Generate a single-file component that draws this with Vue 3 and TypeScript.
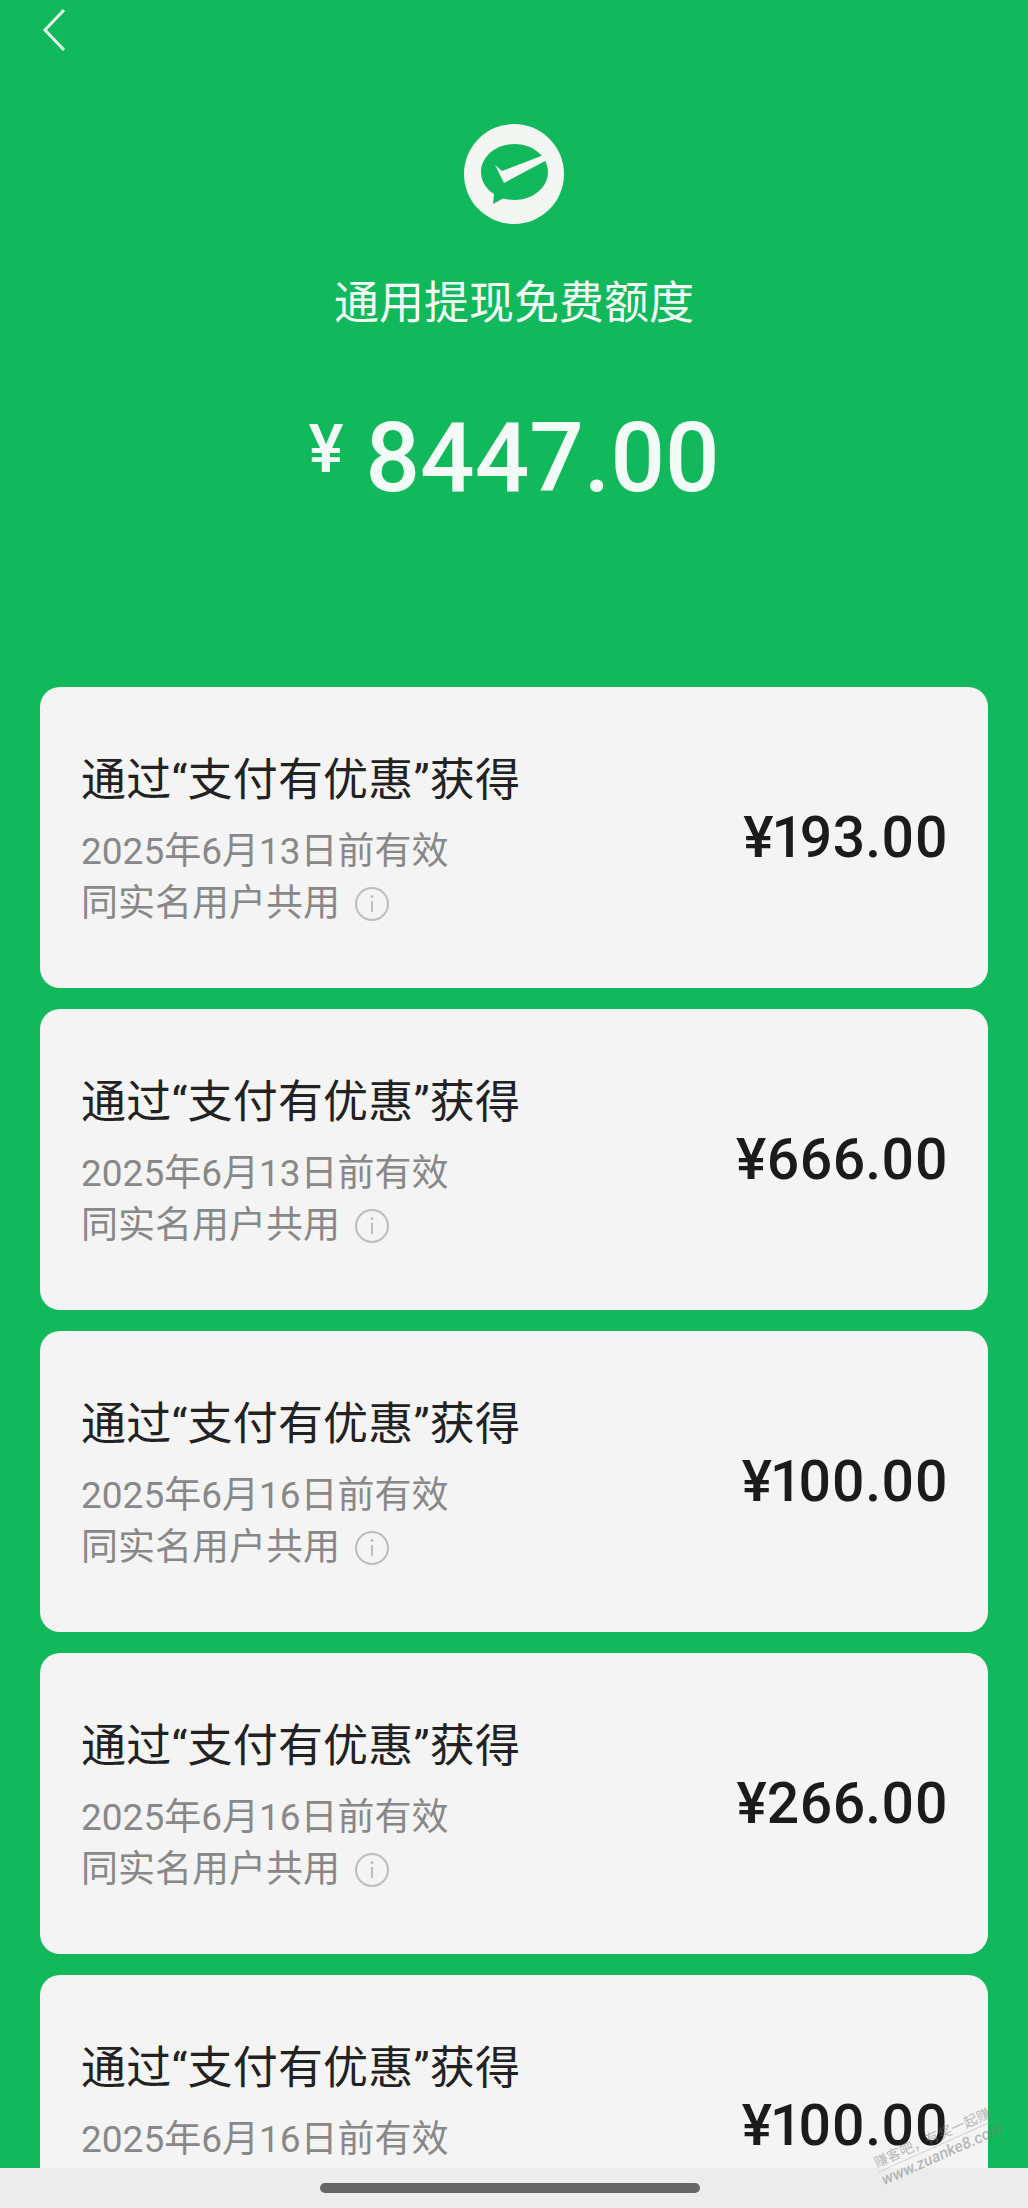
<script setup lang="ts">
interface Quota {
  amount: string
  expires: string
}

const quotas: Quota[] = [
  { amount: '¥193.00', expires: '2025年6月13日前有效' },
  { amount: '¥666.00', expires: '2025年6月13日前有效' },
  { amount: '¥100.00', expires: '2025年6月16日前有效' },
  { amount: '¥266.00', expires: '2025年6月16日前有效' },
  { amount: '¥100.00', expires: '2025年6月16日前有效' },
]
</script>

<template>
  <main class="page">
    <header class="head">
      <svg class="back" width="24" height="44" viewBox="0 0 24 44" fill="none">
        <path d="M22 2 3 22l19 20" stroke="#e6f8ec" stroke-width="3" />
      </svg>
      <svg class="logo" width="100" height="100" viewBox="0 0 100 100">
        <circle cx="50" cy="50" r="50" fill="#f4f6f4" />
        <path
          d="M50.500 20C32 20 17 32.500 17 48c0 9 5 17 13 22l-1 10 10-5.500c3.500 1 7.500 1.500 11.500 1.500C69 76 84 63.500 84 48S69 20 50.500 20z"
          fill="#12b85c"
        />
        <path d="M31 41 38 47 81 30.500 83 36 40 59z" fill="#f4f6f4" />
      </svg>
      <h1 class="title">通用提现免费额度</h1>
      <div class="total">
        <span class="yen">¥</span>
        <span class="sum">8447.00</span>
      </div>
    </header>

    <section class="list">
      <article v-for="(item, i) in quotas" :key="i" class="card">
        <div class="info">
          <div class="source">通过“支付有优惠”获得</div>
          <div class="sub expires">{{ item.expires }}</div>
          <div class="sub shared">
            同实名用户共用
            <svg class="tip" width="36" height="36" viewBox="0 0 36 36" fill="none">
              <circle cx="18" cy="18" r="16" stroke="#bdbdbd" stroke-width="2" />
              <path d="M18 15v11" stroke="#bdbdbd" stroke-width="2" />
              <circle cx="18" cy="10.500" r="1.500" fill="#bdbdbd" />
            </svg>
          </div>
        </div>
        <div class="amount">{{ item.amount }}</div>
      </article>
    </section>

    <footer class="home-bar"><span class="pill"></span></footer>
    <div class="watermark">
      <div class="wm-cn">赚客吧，有奖一起赚</div>
      <div class="wm-en">www.zuanke8.com</div>
    </div>
  </main>
</template>

<style scoped>
.page {
  position: relative;
  width: 1028px;
  height: 2208px;
  overflow: hidden;
  background: #12b85c;
  font-family: Roboto, "Noto Sans CJK SC", sans-serif;
}

.head {
  height: 687px;
  display: flex;
  flex-direction: column;
  align-items: center;
  color: #f3fbf6;
}

.back {
  align-self: flex-start;
  margin: 8px 0 0 42px;
}

.logo {
  margin-top: 72px;
}

.title {
  margin: 50px 0 0;
  font-size: 45px;
  line-height: 60px;
  font-weight: 400;
}

.total {
  display: flex;
  align-items: flex-start;
  gap: 22px;
  margin-top: 67px;
}

.yen {
  margin-top: 4px;
  font-size: 66px;
  line-height: 90px;
  font-weight: 500;
}

.sum {
  font-size: 96px;
  line-height: 114px;
  font-weight: 500;
}

.list {
  display: flex;
  flex-direction: column;
  gap: 21px;
  padding: 0 40px;
}

.card {
  flex: none;
  display: flex;
  align-items: center;
  justify-content: space-between;
  height: 301px;
  padding: 0 40px 0 41px;
  box-sizing: border-box;
  background: #f4f4f4;
  border-radius: 20px;
}

.info {
  display: flex;
  flex-direction: column;
  padding-top: 5px;
}

.source {
  font-size: 45px;
  line-height: 60px;
  letter-spacing: 0.2px;
  color: #222;
  margin-bottom: 15px;
}

.sub {
  font-size: 37px;
  line-height: 52px;
  color: #888;
}

.shared {
  display: flex;
  align-items: center;
  gap: 14px;
}

.tip {
  flex: none;
}

.amount {
  font-size: 57px;
  line-height: 70px;
  font-weight: 500;
  font-variant-numeric: proportional-nums;
  color: #1b1b1b;
}

.home-bar {
  position: absolute;
  left: 0;
  right: 0;
  bottom: 0;
  height: 40px;
  background: #ececec;
  display: flex;
  justify-content: center;
  padding-top: 15px;
  box-sizing: border-box;
}

.pill {
  width: 380px;
  height: 10px;
  margin-right: 8px;
  border-radius: 5px;
  background: #666;
}

.watermark {
  position: absolute;
  left: 886px;
  top: 2152px;
  transform: rotate(-24deg);
  transform-origin: left bottom;
  color: rgba(120, 120, 120, 0.5);
  white-space: nowrap;
}

.wm-cn {
  font-size: 14px;
  line-height: 18px;
  border-bottom: 1px solid rgba(150, 150, 150, 0.35);
}

.wm-en {
  font-size: 16px;
  line-height: 18px;
  font-weight: 500;
  font-style: italic;
}
</style>
